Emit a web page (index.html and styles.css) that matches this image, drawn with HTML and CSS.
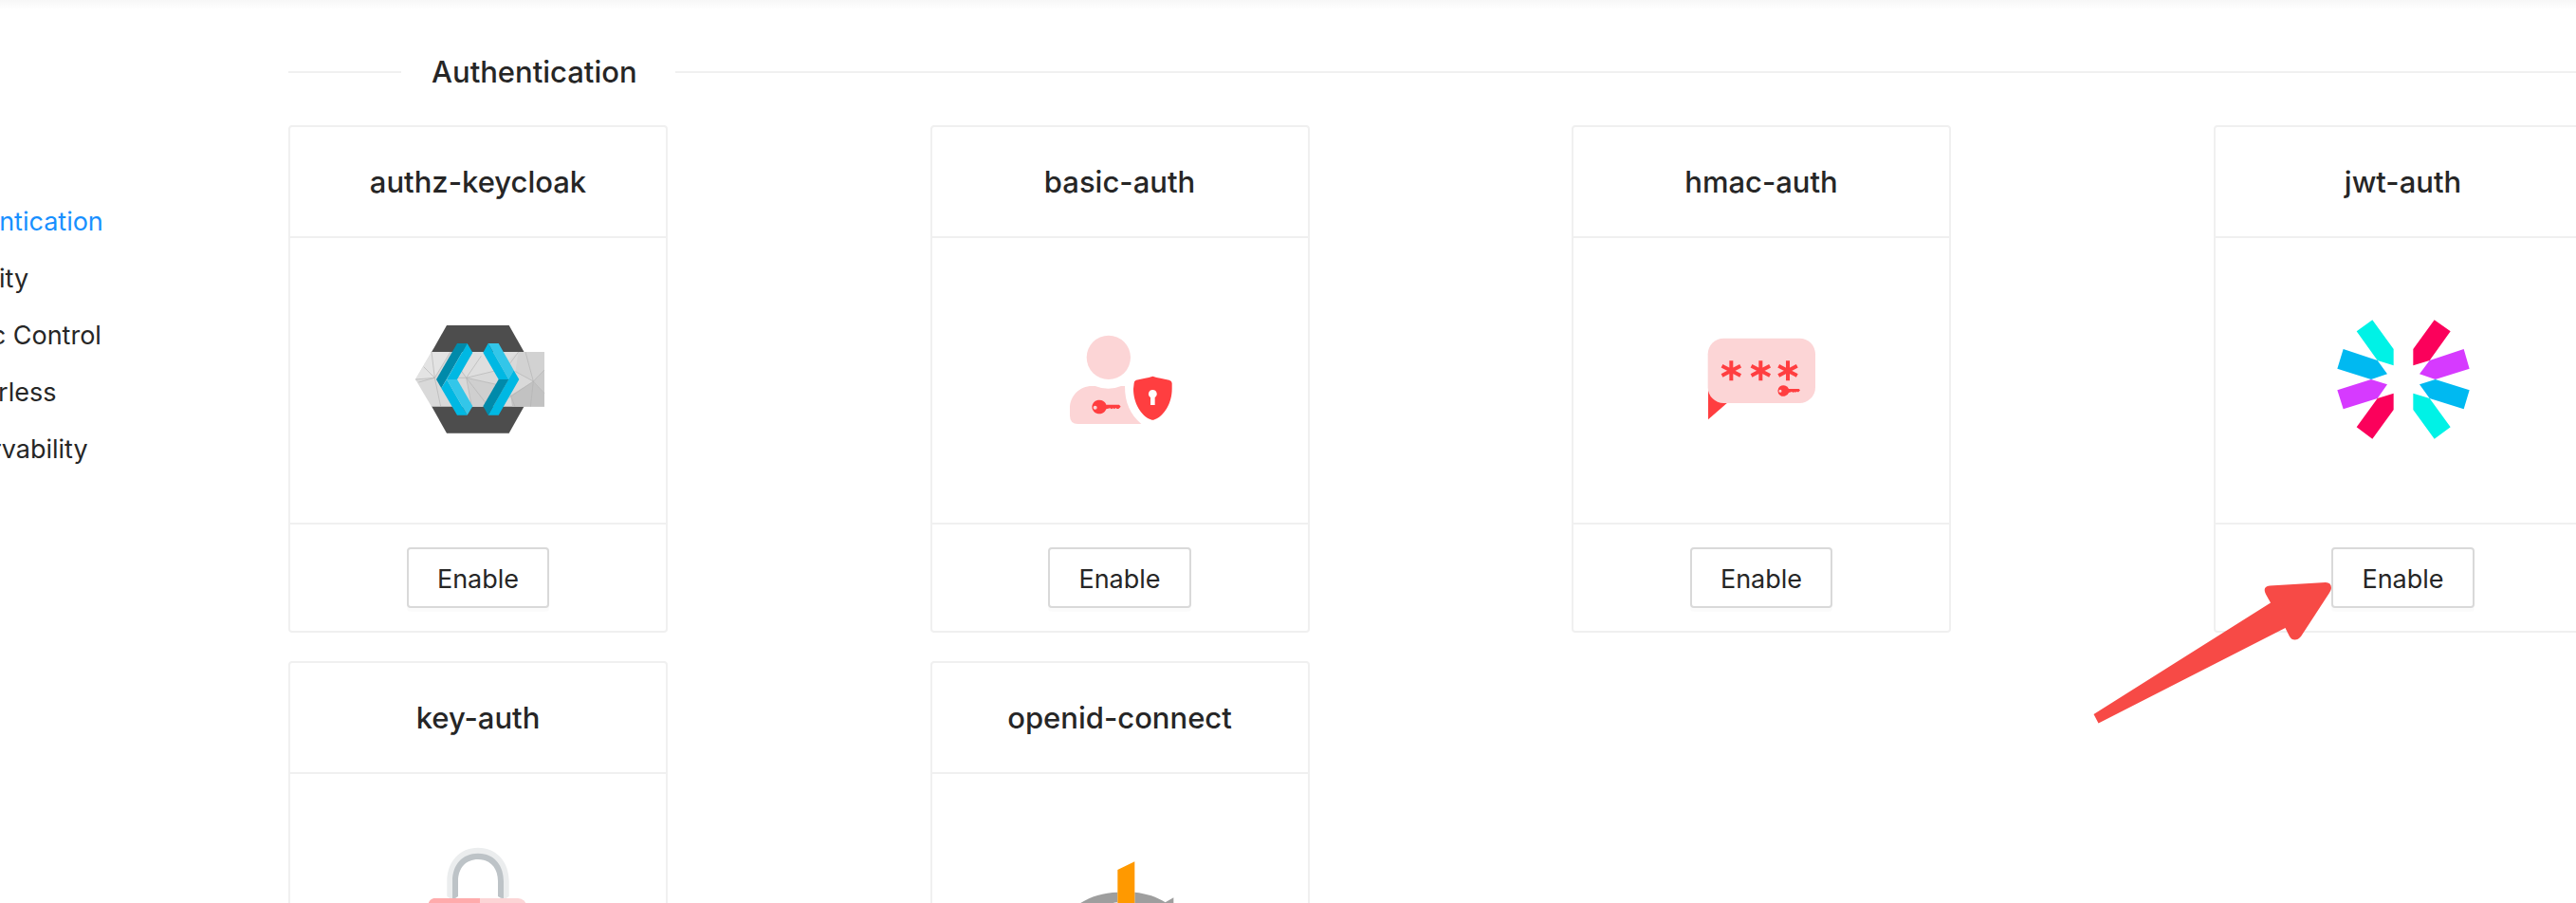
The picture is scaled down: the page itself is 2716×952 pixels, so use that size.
FILE: index.html
```html
<!DOCTYPE html>
<html lang="en">
<head>
<meta charset="utf-8">
<title>Plugins</title>
<link rel="stylesheet" href="styles.css">
</head>
<body>
<div class="page">
  <nav class="sidebar" aria-label="Plugin categories">
    <a class="nav-link nav-link-active" href="#authentication">Authentication</a>
    <a class="nav-link" href="#security">Security</a>
    <a class="nav-link" href="#traffic">Traffic Control</a>
    <a class="nav-link" href="#serverless">Serverless</a>
    <a class="nav-link" href="#observability">Observability</a>
  </nav>
  <main class="content" id="authentication">
    <h2 class="divider"><span class="divider-text">Authentication</span></h2>
    <div class="grid">
      <article class="card">
        <h3 class="card-title">authz-keycloak</h3>
        <div class="card-body">
          <svg width="170" height="160" viewBox="-3 3 510 480" aria-hidden="true">
            <path fill="#4d4d4d" d="M153 69H350L398 154V325L350 410H153L105 325V154Z"/>
            <path fill="#d9d9d9" d="M105 153H462V326H105L54 240Z"/>
            <path fill="#e3e3e3" d="M105 153H165L115 235L54 240Z"/>
            <path fill="#dedede" d="M165 153H380L300 215L215 235Z"/>
            <path fill="#cfcfcf" d="M215 235L320 258L335 326H232Z"/>
            <path fill="#d2d2d2" d="M380 153H462V210L427 246L370 215Z"/>
            <path fill="#c2c2c2" d="M427 246L462 284V326H360L355 290Z"/>
            <path fill="#cacaca" d="M427 246L462 210V284Z"/>
            <path fill="none" stroke="#b3b3b3" stroke-width="2" d="M105 153L115 235L54 240M80 200L115 235L64 249M115 235L134 326M115 235L165 153M190 200L215 235L262 166M215 235L310 212M215 235L320 258M215 235L232 326M215 235L285 326M380 153L345 200M402 153L427 246L462 210M370 215L427 246L350 298M427 246L462 284M427 246L418 326M355 290L369 326M160 235H215"/>
            <path fill="#008aaa" d="M186 126H218L136 268L120 240Z"/>
            <path fill="#00b8e3" d="M218 126L235 155L186 240H153ZM136 268L153 240L218 353H186Z"/>
            <path fill="#33c6e9" d="M153 240H186L235 325L218 353Z"/>
            <path fill="#33c6e9" d="M284 126H317L365 211L349 240Z"/>
            <path fill="#00b8e3" d="M284 126L349 240H317L268 155ZM365 211L382 240L317 353H284Z"/>
            <path fill="#008aaa" d="M317 240H349L284 353L268 325Z"/>
          </svg>
        </div>
        <div class="card-footer"><button class="button" type="button">Enable</button></div>
      </article>
      <article class="card">
        <h3 class="card-title">basic-auth</h3>
        <div class="card-body">
          <svg width="150" height="140" viewBox="-12 3 450 420" aria-hidden="true">
            <circle cx="176.500" cy="140.500" r="69.500" fill="#fcd5d6"/>
            <path fill="#fcd5d6" d="M124 231H134Q176 248 216 231H228C228 285 245 320 280 351H80Q54 351 54 325V301C54 262 85 231 124 231Z"/>
            <path fill="#ff3e40" d="M257 222Q257 215 264 212L292 206Q304 204 316 200Q328 204 340 206L368 212Q377 215 377 222V240C377 285 353 325 322 337Q316 340 310 337C279 325 255 285 255 240Z"/>
            <path fill="#fff" d="M316 243A13 13 0 0 1 323 267V291H309V267A13 13 0 0 1 316 243Z"/>
            <path fill="#ff3e40" fill-rule="evenodd" d="M169 290H210L215 296L208 303H203L199 300L195 304L191 301L186 304L181 301L169 304A23 22 0 1 1 169 290ZM134 293A6 6 0 1 0 134 305A6 6 0 1 0 134 293Z"/>
          </svg>
        </div>
        <div class="card-footer"><button class="button" type="button">Enable</button></div>
      </article>
      <article class="card">
        <h3 class="card-title">hmac-auth</h3>
        <div class="card-body">
          <svg width="150" height="120" viewBox="6 3 450 360" aria-hidden="true">
            <path fill="#ff3e40" d="M63 205V307L125 253Z"/>
            <rect x="62" y="50" width="340" height="205" rx="50" fill="#fcd5d6"/>
            <path stroke="#ff3e40" stroke-width="12" stroke-linecap="square" fill="none" d="M136 127V178M112 140L160 165M160 140L112 165M229 127V178M205 140L253 165M253 140L205 165M315 127V178M291 140L339 165M339 140L291 165"/>
            <path fill="#ff3e40" fill-rule="evenodd" d="M318 210H350L354 214L349 220H345L342 218L339 222L336 219L332 222L328 219L318 222A18 17.500 0 1 1 318 210ZM291 212A4.500 4.500 0 1 0 291 221A4.500 4.500 0 1 0 291 212Z"/>
          </svg>
        </div>
        <div class="card-footer"><button class="button" type="button">Enable</button></div>
      </article>
      <article class="card">
        <h3 class="card-title">jwt-auth</h3>
        <div class="card-body">
          <svg width="180" height="160" viewBox="12 3 540 480" aria-hidden="true">
            <path fill="#00f2e6" d="M184 52L251 144V196L200 180L134 88ZM313 284L365 300L431 391L380 428L313 336Z"/>
            <path fill="#00b9f1" d="M92 144L200 180L231 223L180 240L73 206ZM333 256L383 240L491 274L473 334L365 300Z"/>
            <path fill="#d63aff" d="M473 144L491 206L383 240L333 223L365 180ZM73 274L180 240L231 256L200 300L92 334Z"/>
            <path fill="#fb015b" d="M380 52L431 88L365 180L313 196V144ZM251 284V336L184 428L134 391L200 300Z"/>
          </svg>
        </div>
        <div class="card-footer">
          <div class="callout">
            <button class="button" type="button">Enable</button>
            <svg class="callout-arrow" width="254" height="152" viewBox="2208 612 254 152" aria-hidden="true">
              <path fill="#f74a46" d="M2209.500 753L2396 635.500L2391 626.500Q2387 618.500 2395 617.500L2454 614Q2460 614 2460 620Q2460 622 2458 625L2428 671Q2425 674.500 2421.500 674.500Q2418 674.500 2416 671L2411.500 662L2214.500 762.500Z"/>
            </svg>
          </div>
        </div>
      </article>
      <article class="card">
        <h3 class="card-title">key-auth</h3>
        <div class="card-body">
          <svg width="170" height="160" viewBox="-3 78 510 480" aria-hidden="true">
            <path fill="#ebedee" d="M154 255V207C154 145 194 101 252 101S350 145 350 207V255L341 261H325V207C325 165 295 130 252 130S180 165 180 207V261H163Z"/>
            <path fill="#bdc3c7" d="M171 261V207C171 155 202 119 252 119S333 155 333 207V261L324 260L315 255V207C315 165 290 138 252 138S189 165 189 207V255L180 261Z"/>
            <rect x="95" y="261" width="310" height="250" rx="26" fill="#fcd5d6"/>
            <path fill="#ffabac" d="M258 261V511H121Q95 511 95 485V280Q97 264 112 261Z"/>
          </svg>
        </div>
        <div class="card-footer"><button class="button" type="button">Enable</button></div>
      </article>
      <article class="card">
        <h3 class="card-title">openid-connect</h3>
        <div class="card-body">
          <svg width="160" height="160" viewBox="-28 18 480 480" aria-hidden="true">
            <path fill="#9e9e9e" d="M204 182C110 184 28 240 28 306C28 374 105 428 204 434V404C130 394 78 354 78 306C78 258 130 222 204 214ZM258 182C296 186 328 196 355 214L381 199V290L280 262L314 240Q288 222 258 216Z"/>
            <path fill="#ff9900" d="M204 111L258 85V408L204 434Z"/>
          </svg>
        </div>
        <div class="card-footer"><button class="button" type="button">Enable</button></div>
      </article>
    </div>
  </main>
</div>
</body>
</html>
```
FILE: styles.css
```css
* {
  box-sizing: border-box;
}

body {
  margin: 0;
  background: #fff;
  color: #262626;
  font-family: Inter, "Liberation Sans", sans-serif;
  font-size: 27px;
}

.page {
  display: flex;
  height: 100vh;
  overflow: hidden;
  background: linear-gradient(#f7f7f7, #fff 10px);
}

.sidebar {
  display: flex;
  flex: none;
  flex-direction: column;
  width: 380px;
  margin-left: -76px;
  padding-top: 204px;
}

.nav-link {
  color: #262626;
  line-height: 60px;
  text-decoration: none;
}

.nav-link-active {
  color: #1890ff;
}

.content {
  flex: none;
  width: calc(100% - 10px);
  padding-top: 48px;
}

.divider {
  display: flex;
  align-items: center;
  margin: 0 0 28px;
  font-size: 31px;
  font-weight: 500;
  line-height: 56px;
}

.divider::before,
.divider::after {
  content: "";
  width: 119px;
  border-top: 2px solid #f0f0f0;
}

.divider::after {
  flex: 1;
}

.divider-text {
  padding: 0 40px 0 32px;
}

.grid {
  display: grid;
  grid-template-columns: repeat(4, 1fr);
  row-gap: 30px;
}

.card {
  width: 400px;
  border: 2px solid #f0f0f0;
  border-radius: 4px;
  background: #fff;
}

.card-title {
  margin: 0;
  padding: 32px 24px;
  border-bottom: 2px solid #f0f0f0;
  font-size: 31px;
  font-weight: 500;
  line-height: 51px;
  text-align: center;
}

.card-body {
  display: flex;
  align-items: center;
  justify-content: center;
  height: 300px;
}

.card-footer {
  display: flex;
  justify-content: center;
  padding: 24px;
  border-top: 2px solid #f0f0f0;
}

.button {
  height: 64px;
  padding: 2px 30px 0;
  border: 2px solid #d9d9d9;
  border-radius: 4px;
  background: #fff;
  box-shadow: 0 4px 0 rgba(0, 0, 0, 0.016);
  color: #262626;
  font: inherit;
}

.callout {
  position: relative;
}

.callout-arrow {
  position: absolute;
  top: 35px;
  right: calc(100% - 2px);
}
```
